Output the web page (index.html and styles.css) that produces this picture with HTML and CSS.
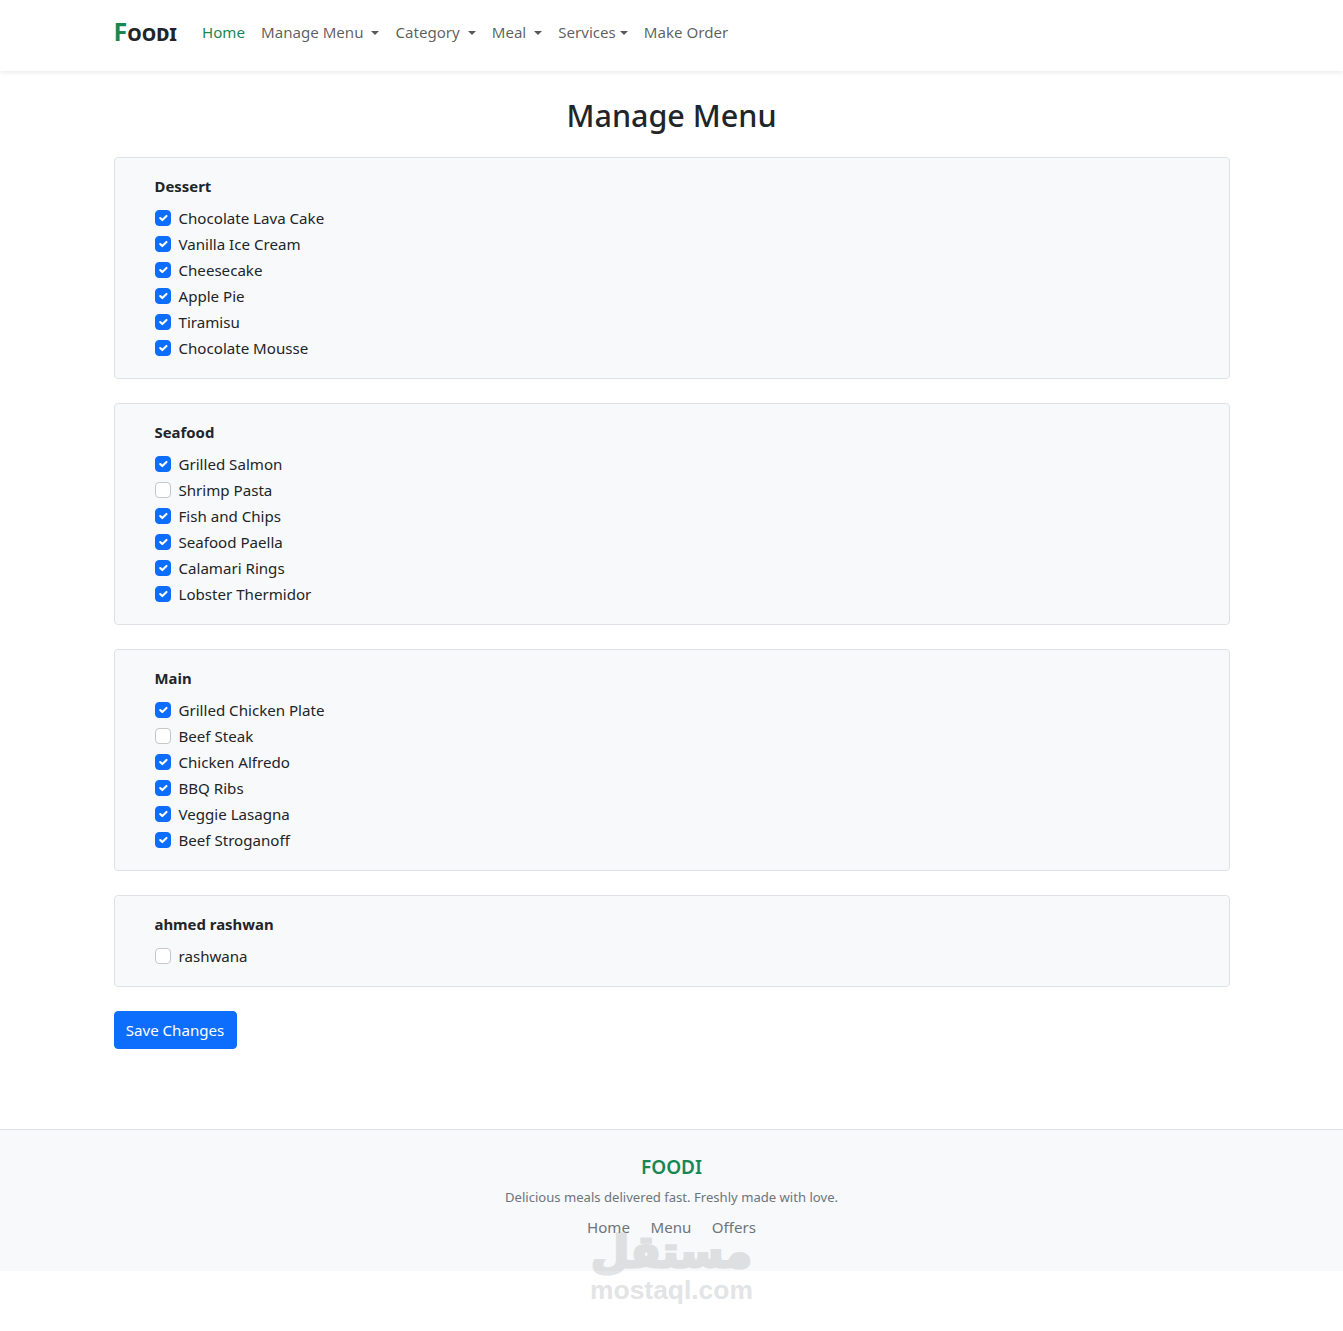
FILE: index.html
```html
<!DOCTYPE html>
<html lang="en">
<head>
<meta charset="utf-8">
<title>Manage Menu</title>
<link rel="stylesheet" href="styles.css">
</head>
<body>
<nav class="navbar">
  <div class="container nav-inner">
    <a class="brand" href="#"><span class="brand-f">F</span>oodi</a>
    <ul class="nav-links">
      <li><a class="nav-link active" href="#">Home</a></li>
      <li><a class="nav-link caret" href="#">Manage Menu </a></li>
      <li><a class="nav-link caret" href="#">Category </a></li>
      <li><a class="nav-link caret" href="#">Meal </a></li>
      <li><a class="nav-link caret" href="#">Services</a></li>
      <li><a class="nav-link" href="#">Make Order</a></li>
    </ul>
  </div>
</nav>
<main class="container main">
  <h2 class="title">Manage Menu</h2>
  <form>
    <section class="card">
      <h5 class="card-title">Dessert</h5>
      <label class="check"><input type="checkbox" checked>Chocolate Lava Cake</label>
      <label class="check"><input type="checkbox" checked>Vanilla Ice Cream</label>
      <label class="check"><input type="checkbox" checked>Cheesecake</label>
      <label class="check"><input type="checkbox" checked>Apple Pie</label>
      <label class="check"><input type="checkbox" checked>Tiramisu</label>
      <label class="check"><input type="checkbox" checked>Chocolate Mousse</label>
    </section>
    <section class="card">
      <h5 class="card-title">Seafood</h5>
      <label class="check"><input type="checkbox" checked>Grilled Salmon</label>
      <label class="check"><input type="checkbox">Shrimp Pasta</label>
      <label class="check"><input type="checkbox" checked>Fish and Chips</label>
      <label class="check"><input type="checkbox" checked>Seafood Paella</label>
      <label class="check"><input type="checkbox" checked>Calamari Rings</label>
      <label class="check"><input type="checkbox" checked>Lobster Thermidor</label>
    </section>
    <section class="card">
      <h5 class="card-title">Main</h5>
      <label class="check"><input type="checkbox" checked>Grilled Chicken Plate</label>
      <label class="check"><input type="checkbox">Beef Steak</label>
      <label class="check"><input type="checkbox" checked>Chicken Alfredo</label>
      <label class="check"><input type="checkbox" checked>BBQ Ribs</label>
      <label class="check"><input type="checkbox" checked>Veggie Lasagna</label>
      <label class="check"><input type="checkbox" checked>Beef Stroganoff</label>
    </section>
    <section class="card">
      <h5 class="card-title">ahmed rashwan</h5>
      <label class="check"><input type="checkbox">rashwana</label>
    </section>
    <button class="btn" type="button">Save Changes</button>
  </form>
</main>
<footer class="footer">
  <h5 class="footer-brand">FOODI</h5>
  <p class="footer-text">Delicious meals delivered fast. Freshly made with love.</p>
  <div class="footer-links">
    <a href="#">Home</a>
    <a href="#">Menu</a>
    <a href="#">Offers</a>
  </div>
</footer>
<div class="watermark">
  <div class="wm-ar" lang="ar" dir="rtl">مستقل</div>
  <div class="wm-en">mostaql.com</div>
</div>
</body>
</html>
```
FILE: styles.css
```css
* { box-sizing: border-box; }
html, body { margin: 0; padding: 0; }
body {
  position: relative;
  min-height: 1331px;
  font-family: "Noto Sans", "Open Sans", sans-serif;
  font-size: 15.1px;
  line-height: 24px;
  color: #212529;
  background: #fff;
}
a { text-decoration: none; }
.container { width: 1140px; margin: 0 auto; padding: 0 12px; }

.navbar { height: 71px; background: #fff; box-shadow: 0 2px 4px rgba(0,0,0,.075); }
.nav-inner { height: 100%; display: flex; align-items: center; padding-bottom: 7px; }
.brand {
  font-size: 21.6px;
  font-weight: 700;
  font-variant: small-caps;
  color: #212529;
  margin-right: 17px;
  line-height: 36px;
}
.brand-f { color: #198754; font-size: 25px; }
.nav-links { list-style: none; display: flex; margin: 0; padding: 0; }
.nav-link { display: block; padding: 8px; color: rgba(0,0,0,.65); white-space: pre; }
.nav-link.active { color: #198754; }
.caret::after {
  content: "";
  display: inline-block;
  margin-left: 4px;
  vertical-align: 3px;
  border-top: 4.8px solid;
  border-right: 4.8px solid transparent;
  border-left: 4.8px solid transparent;
}

.main { padding-top: 24px; }
.title { margin: 0 0 22px; text-align: center; font-size: 30.5px; line-height: 40px; font-weight: 500; }
.card {
  background: #f8f9fa;
  border: 1px solid #dee2e6;
  border-radius: 4px;
  padding: 16px 40px;
  margin-bottom: 24px;
}
.card-title { margin: 0 0 8px; font-size: 14.9px; line-height: 24px; font-weight: 700; }
.check { display: flex; align-items: center; height: 24px; margin-bottom: 2px; }
.check input {
  appearance: none;
  width: 16px;
  height: 16px;
  margin: 0 8px 0 0;
  background: #fff;
  border: 1px solid #c4c8cc;
  border-radius: 4px;
  flex: none;
}
.check input:checked {
  background: #0d6efd url("data:image/svg+xml,%3csvg xmlns='http://www.w3.org/2000/svg' viewBox='0 0 20 20'%3e%3cpath fill='none' stroke='%23fff' stroke-linecap='round' stroke-linejoin='round' stroke-width='3' d='m6 10 3 3 6-6'/%3e%3c/svg%3e") center/100% no-repeat;
  border-color: #0d6efd;
}
.btn {
  display: block;
  width: 123px;
  height: 38px;
  padding: 0;
  font: inherit;
  color: #fff;
  background: #0d6efd;
  border: 1px solid #0d6efd;
  border-radius: 4px;
}

.footer {
  margin-top: 80px;
  height: 142px;
  background: #f8f9fa;
  border-top: 1px solid #dee2e6;
  padding-top: 25px;
  text-align: center;
}
.footer-brand { margin: 0 0 8px; font-size: 19px; line-height: 24px; font-weight: 600; color: #198754; }
.footer-text { margin: 0 0 7px; font-size: 13.1px; line-height: 21px; color: #6c757d; }
.footer-links { display: flex; justify-content: center; gap: 20.5px; }
.footer-links a { color: #6c757d; }

.watermark {
  position: absolute;
  left: 0;
  right: 0;
  top: 1229px;
  text-align: center;
  pointer-events: none;
  color: #8f959b;
  opacity: .25;
  font-weight: 700;
}
.wm-ar {
  font-family: "DejaVu Sans", sans-serif;
  font-size: 44px;
  line-height: 46px;
  -webkit-text-stroke: 3px #8f959b;
}
.wm-en { font-family: "Liberation Sans", sans-serif; font-size: 26.4px; line-height: 30px; }
```
